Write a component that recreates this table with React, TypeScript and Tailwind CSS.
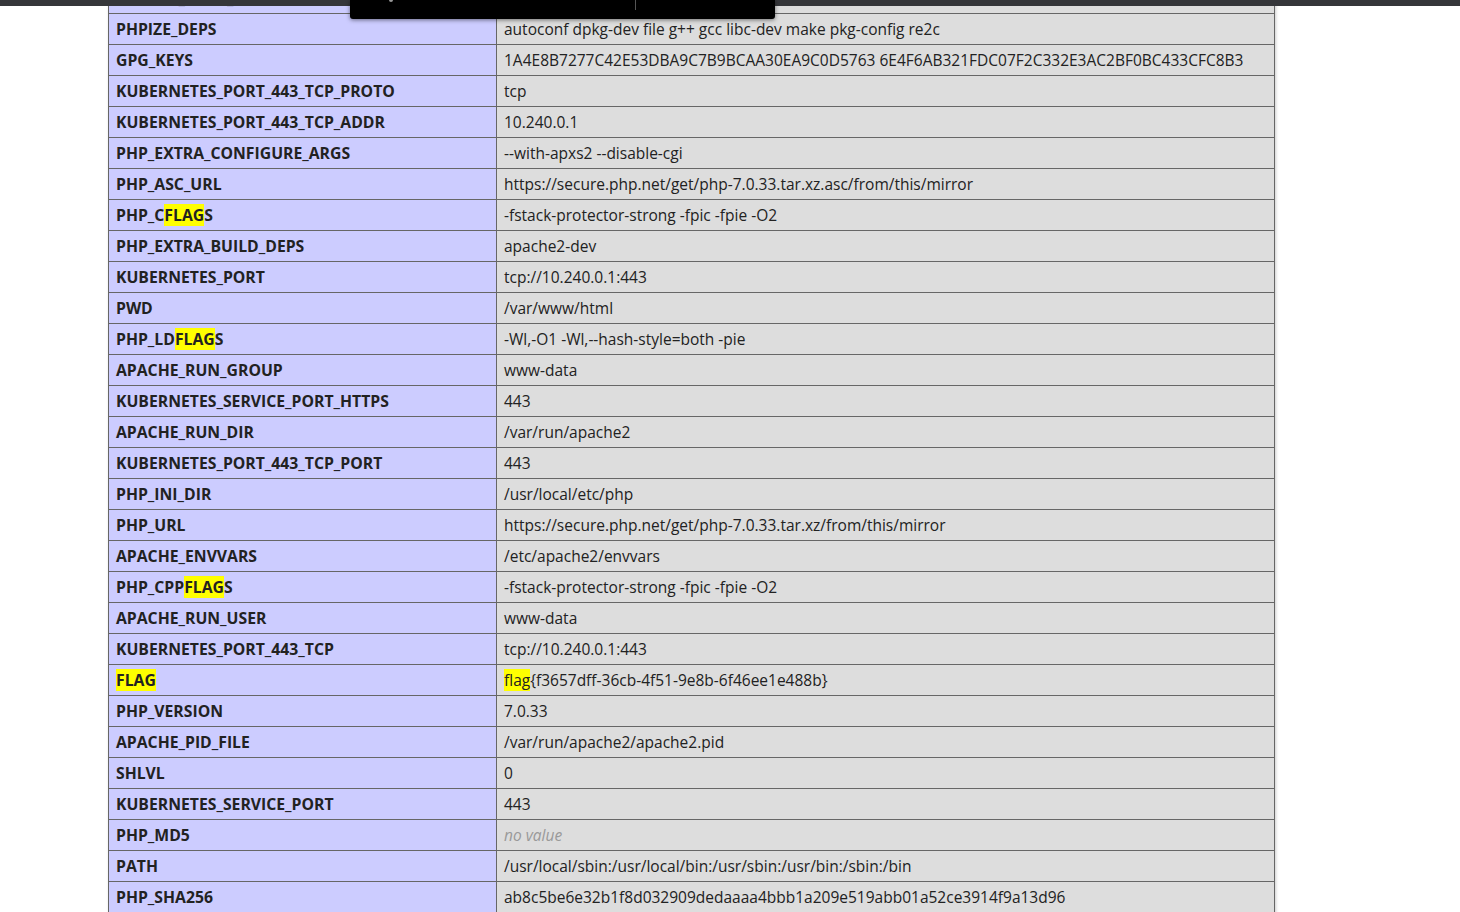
import React from "react";

type Row = { k: React.ReactNode; v: React.ReactNode };

const HL = ({ children }: { children: React.ReactNode }) => (
  <span className="bg-[#ffff00]">{children}</span>
);

const rows: Row[] = [
  { k: "APACHE_LOCK_DIR", v: "/var/lock/apache2" },
  { k: "PHPIZE_DEPS", v: "autoconf dpkg-dev file g++ gcc libc-dev make pkg-config re2c" },
  { k: "GPG_KEYS", v: "1A4E8B7277C42E53DBA9C7B9BCAA30EA9C0D5763 6E4F6AB321FDC07F2C332E3AC2BF0BC433CFC8B3" },
  { k: "KUBERNETES_PORT_443_TCP_PROTO", v: "tcp" },
  { k: "KUBERNETES_PORT_443_TCP_ADDR", v: "10.240.0.1" },
  { k: "PHP_EXTRA_CONFIGURE_ARGS", v: "--with-apxs2 --disable-cgi" },
  { k: "PHP_ASC_URL", v: "https://secure.php.net/get/php-7.0.33.tar.xz.asc/from/this/mirror" },
  { k: <>PHP_C<HL>FLAG</HL>S</>, v: "-fstack-protector-strong -fpic -fpie -O2" },
  { k: "PHP_EXTRA_BUILD_DEPS", v: "apache2-dev" },
  { k: "KUBERNETES_PORT", v: "tcp://10.240.0.1:443" },
  { k: "PWD", v: "/var/www/html" },
  { k: <>PHP_LD<HL>FLAG</HL>S</>, v: "-Wl,-O1 -Wl,--hash-style=both -pie" },
  { k: "APACHE_RUN_GROUP", v: "www-data" },
  { k: "KUBERNETES_SERVICE_PORT_HTTPS", v: "443" },
  { k: "APACHE_RUN_DIR", v: "/var/run/apache2" },
  { k: "KUBERNETES_PORT_443_TCP_PORT", v: "443" },
  { k: "PHP_INI_DIR", v: "/usr/local/etc/php" },
  { k: "PHP_URL", v: "https://secure.php.net/get/php-7.0.33.tar.xz/from/this/mirror" },
  { k: "APACHE_ENVVARS", v: "/etc/apache2/envvars" },
  { k: <>PHP_CPP<HL>FLAG</HL>S</>, v: "-fstack-protector-strong -fpic -fpie -O2" },
  { k: "APACHE_RUN_USER", v: "www-data" },
  { k: "KUBERNETES_PORT_443_TCP", v: "tcp://10.240.0.1:443" },
  { k: <HL>FLAG</HL>, v: <><HL>flag</HL>{"{f3657dff-36cb-4f51-9e8b-6f46ee1e488b}"}</> },
  { k: "PHP_VERSION", v: "7.0.33" },
  { k: "APACHE_PID_FILE", v: "/var/run/apache2/apache2.pid" },
  { k: "SHLVL", v: "0" },
  { k: "KUBERNETES_SERVICE_PORT", v: "443" },
  { k: "PHP_MD5", v: <i className="text-[#999]">no value</i> },
  { k: "PATH", v: "/usr/local/sbin:/usr/local/bin:/usr/sbin:/usr/bin:/sbin:/bin" },
  { k: "PHP_SHA256", v: "ab8c5be6e32b1f8d032909dedaaaa4bbb1a209e519abb01a52ce3914f9a13d96" },
];

export default function App() {
  return (
    <div
      className="relative h-[912px] w-[1460px] overflow-hidden bg-white text-[#222]"
      style={{ fontFamily: '"Open Sans", "Noto Sans", sans-serif' }}
    >
      <div className="ml-[108px] mt-[-17px] w-[1167px] border-x border-[#666] shadow-[1px_2px_3px_#ccc]">
        {rows.map((r, i) => (
          <div key={i} className="flex h-[31px] border-b border-[#666]">
            <div className="flex w-[388px] shrink-0 items-center border-r border-[#666] bg-[#ccccff] pl-[7px] text-[15.75px] font-bold leading-[20px] whitespace-nowrap">
              <span>{r.k}</span>
            </div>
            <div className="flex flex-1 items-center bg-[#dddddd] pl-[7px] text-[15.5px] leading-[20px] whitespace-nowrap">
              <span>{r.v}</span>
            </div>
          </div>
        ))}
      </div>

      {/* browser top strip */}
      <div className="absolute left-0 top-0 h-[6px] w-full bg-[#35363a]" />

      {/* find bar popup */}
      <div className="absolute left-[350px] top-0 h-[19px] w-[425px] rounded-b-[3px] bg-black shadow-[0_1px_4px_rgba(0,0,0,0.5)]">
        <div className="absolute left-[39px] top-[-2px] h-[4px] w-[4px] rounded-full bg-[#999]" />
        <div className="absolute left-[285px] top-0 h-[10px] w-px bg-[#555]" />
      </div>
    </div>
  );
}
